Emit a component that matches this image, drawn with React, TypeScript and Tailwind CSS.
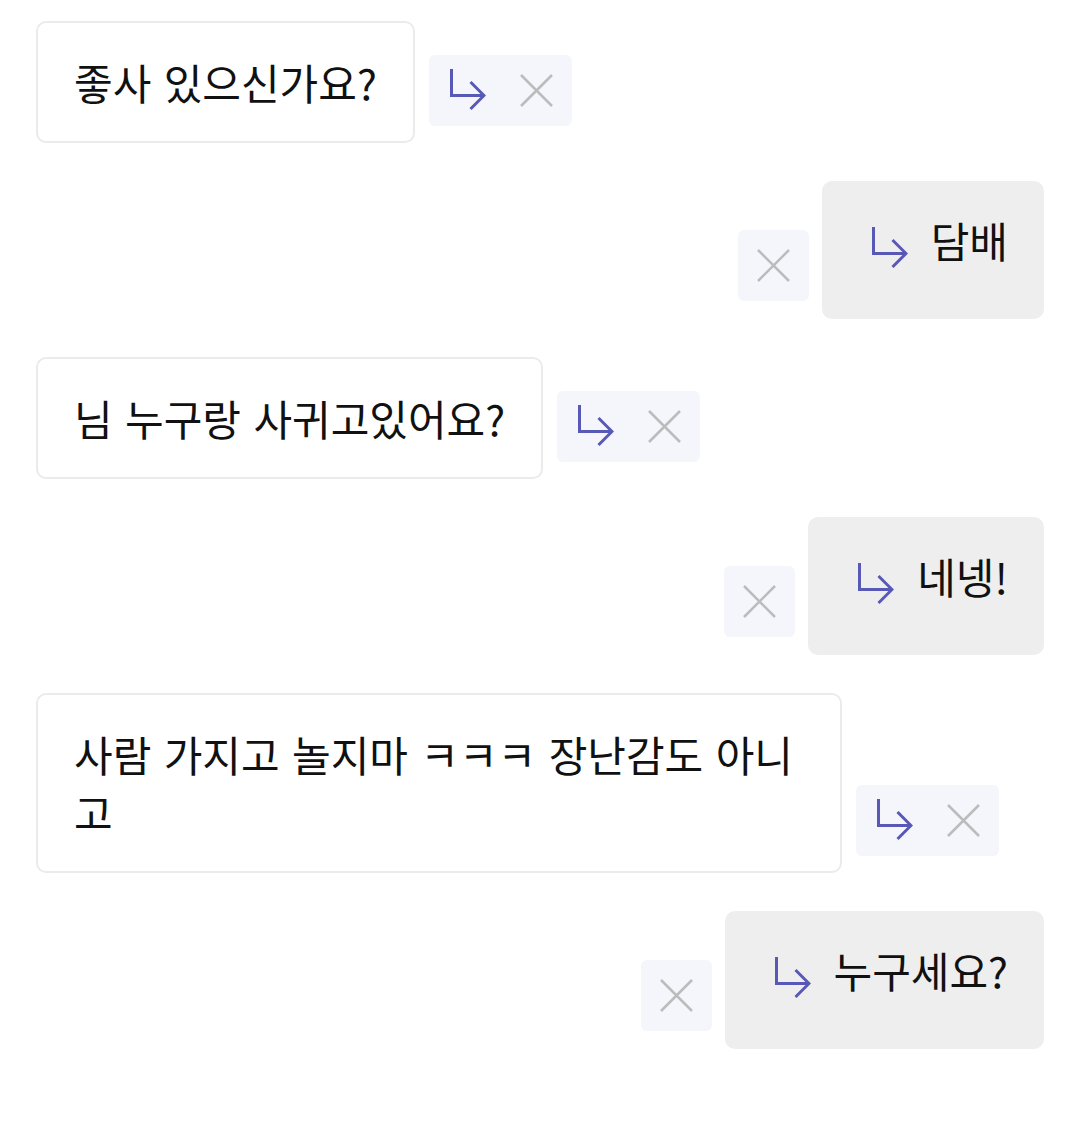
import React from "react";

function ArrowIcon() {
  return (
    <svg width="36" height="44" viewBox="0 0 36 44" fill="none" className="shrink-0">
      <path d="M1.5 1 V27.5 H34" stroke="#5858b6" strokeWidth="3" strokeLinejoin="miter" />
      <path d="M20.5 14 L34 27.5 L20.5 41" stroke="#5858b6" strokeWidth="3" strokeLinejoin="miter" />
    </svg>
  );
}

function XIcon() {
  return (
    <svg width="33" height="33" viewBox="0 0 33 33" fill="none" className="shrink-0">
      <path d="M1 1 L32 32 M32 1 L1 32" stroke="#bcbcbc" strokeWidth="2.5" />
    </svg>
  );
}

function ActionBox() {
  return (
    <div className="mb-[17px] flex h-[71px] shrink-0 items-center rounded-[6px] bg-[#f5f5fc] pl-[21px] pr-[19px] gap-[34px]">
      <ArrowIcon />
      <XIcon />
    </div>
  );
}

function XBox() {
  return (
    <div className="mb-[18px] flex h-[71px] w-[71px] shrink-0 items-center justify-center rounded-[6px] bg-[#f5f5fc]">
      <XIcon />
    </div>
  );
}

function LeftRow({ text }: { text: string }) {
  return (
    <div className="flex items-end gap-[14px]">
      <div className="max-w-[80%] rounded-[10px] border-2 border-[#ebebeb] bg-white px-[36px] py-[30px] text-[42px] leading-[57.6px] text-[#111] [word-spacing:3px]">
        {text}
      </div>
      <ActionBox />
    </div>
  );
}

function RightRow({ text }: { text: string }) {
  return (
    <div className="flex items-end justify-end gap-[13px]">
      <XBox />
      <div className="flex items-start gap-[23px] rounded-[10px] bg-[#eeeeee] pb-[51px] pl-[50px] pr-[36px] pt-[30px]">
        <div className="mt-[15px] mb-[-2px]">
          <ArrowIcon />
        </div>
        <span className="text-[42px] leading-[57.6px] text-[#111]">{text}</span>
      </div>
    </div>
  );
}

export default function App() {
  return (
    <div
      className="min-h-screen bg-white px-[36px] pt-[21px]"
      style={{ fontFamily: '"Noto Sans CJK KR", "Noto Sans", sans-serif' }}
    >
      <div className="flex flex-col gap-[38px]">
        <LeftRow text="좋사 있으신가요?" />
        <RightRow text="담배" />
        <LeftRow text="님 누구랑 사귀고있어요?" />
        <RightRow text="네넹!" />
        <LeftRow text="사람 가지고 놀지마 ㅋㅋㅋ 장난감도 아니고" />
        <RightRow text="누구세요?" />
      </div>
    </div>
  );
}
